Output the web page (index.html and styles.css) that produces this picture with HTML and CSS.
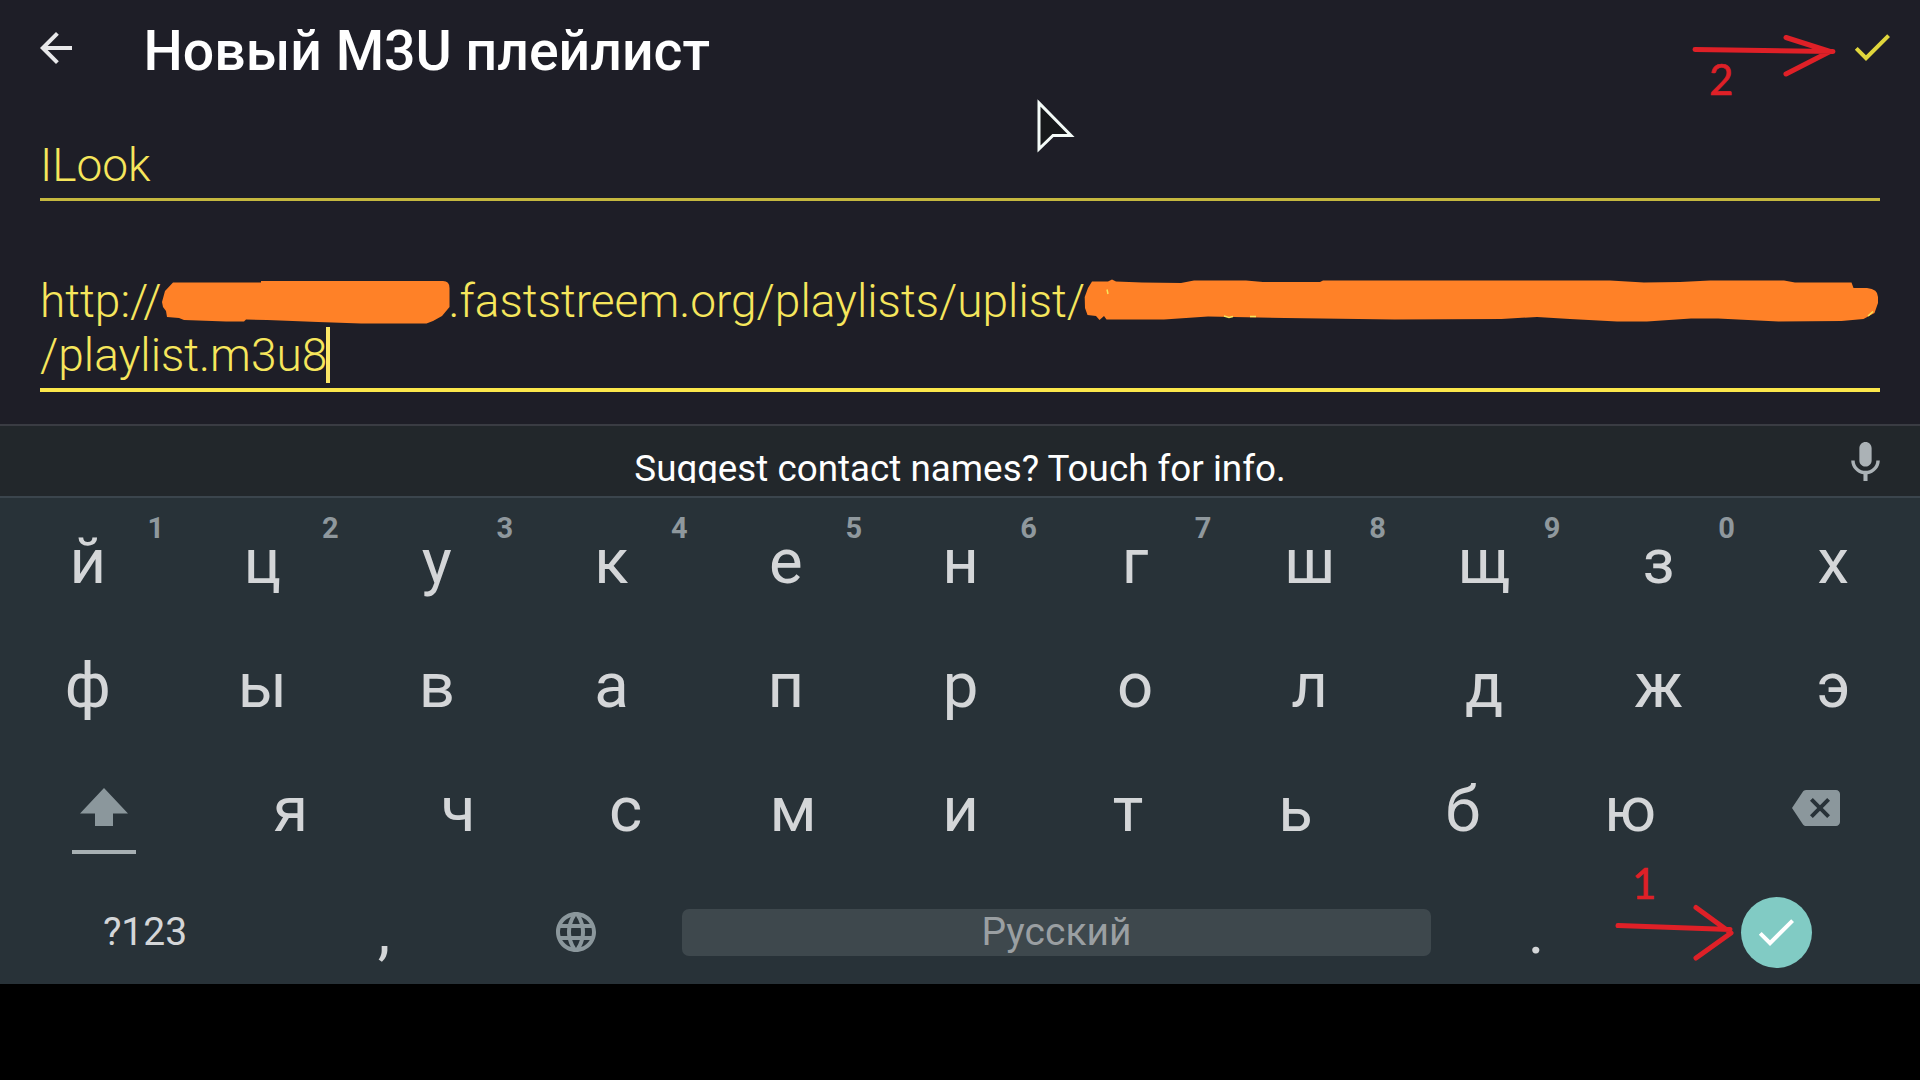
FILE: index.html
```html
<!DOCTYPE html>
<html lang="ru">
<head>
<meta charset="utf-8">
<title>Новый M3U плейлист</title>
<link rel="stylesheet" href="styles.css">
</head>
<body>
<main class="screen">
  <header class="toolbar">
    <svg class="icon back" viewBox="0 0 24 24"><path d="M20 11H7.83l5.59-5.59L12 4l-8 8 8 8 1.41-1.41L7.83 13H20v-2z"/></svg>
    <h1 class="title">Новый M3U плейлист</h1>
    <svg class="icon done" viewBox="0 0 24 24"><path d="M9 16.17L4.83 12l-1.42 1.41L9 19 21 7l-1.41-1.41z"/></svg>
  </header>
  <section class="form">
    <div class="field field-name">ILook</div>
    <div class="field field-url"><div class="line">http://<span class="hidden-host"></span>.faststreem.org/playlists/uplist/</div><div class="line">/playlist.m3u8<span class="caret"></span></div></div>
  </section>
  <section class="suggestions">
    <div class="suggestion">Suggest contact names? Touch for info.</div>
    <svg class="icon mic" viewBox="0 0 24 24"><path d="M12 14c1.66 0 3-1.34 3-3V5c0-1.66-1.34-3-3-3S9 3.34 9 5v6c0 1.66 1.34 3 3 3zm5.3-3c0 3-2.54 5.1-5.3 5.1S6.700 14 6.700 11H5c0 3.410 2.720 6.230 6 6.720V21h2v-3.280c3.280-.480 6-3.300 6-6.720h-1.700z"/></svg>
  </section>
  <section class="keyboard">
    <div class="row row-top">
      <div class="key">й<sup>1</sup></div><div class="key">ц<sup>2</sup></div><div class="key">у<sup>3</sup></div><div class="key">к<sup>4</sup></div><div class="key">е<sup>5</sup></div><div class="key">н<sup>6</sup></div><div class="key">г<sup>7</sup></div><div class="key">ш<sup>8</sup></div><div class="key">щ<sup>9</sup></div><div class="key">з<sup>0</sup></div><div class="key">х</div>
    </div>
    <div class="row row-home">
      <div class="key">ф</div><div class="key">ы</div><div class="key">в</div><div class="key">а</div><div class="key">п</div><div class="key">р</div><div class="key">о</div><div class="key">л</div><div class="key">д</div><div class="key">ж</div><div class="key">э</div>
    </div>
    <div class="row row-shift">
      <div class="key shift"><svg viewBox="0 0 66 68"><path d="M33 0 57 25.500H42V38H24V25.500H9z"/><path class="lock" d="M1 62h64v4H1z"/></svg></div>
      <div class="key">я</div><div class="key">ч</div><div class="key">с</div><div class="key">м</div><div class="key">и</div><div class="key">т</div><div class="key">ь</div><div class="key">б</div><div class="key">ю</div>
      <div class="key"><svg class="icon backspace" viewBox="0 0 24 24"><path d="M22 3H7c-.69 0-1.230.350-1.590.880L0 12l5.410 8.110c.360.530.900.890 1.590.890h15c1.100 0 2-.900 2-2V5c0-1.100-.900-2-2-2zm-3 12.590L17.590 17 14 13.410 10.410 17 9 15.590 12.590 12 9 8.410 10.410 7 14 10.590 17.590 7 19 8.410 15.410 12 19 15.590z"/></svg></div>
    </div>
    <div class="row row-bottom">
      <div class="key symbols">?123</div>
      <div class="key">,</div>
      <div class="key"><svg class="icon globe" viewBox="0 0 24 24"><path d="M11.990 2C6.470 2 2 6.480 2 12s4.470 10 9.990 10C17.520 22 22 17.520 22 12S17.520 2 11.990 2zm6.930 6h-2.950c-.320-1.250-.780-2.450-1.380-3.560 1.840.630 3.370 1.910 4.330 3.560zM12 4.040c.830 1.200 1.480 2.530 1.910 3.960h-3.820c.430-1.430 1.080-2.760 1.910-3.960zM4.260 14C4.100 13.360 4 12.690 4 12s.100-1.360.260-2h3.380c-.080.660-.140 1.320-.140 2s.060 1.340.140 2H4.260zm.820 2h2.950c.320 1.250.780 2.450 1.380 3.560-1.840-.630-3.370-1.900-4.330-3.560zm2.950-8H5.080c.960-1.660 2.490-2.930 4.330-3.560C8.810 5.550 8.350 6.750 8.030 8zM12 19.960c-.830-1.200-1.480-2.530-1.910-3.960h3.820c-.430 1.430-1.080 2.760-1.910 3.960zM14.340 14H9.660c-.090-.660-.160-1.320-.160-2s.070-1.350.160-2h4.680c.090.650.160 1.320.160 2s-.070 1.340-.160 2zm.250 5.560c.600-1.110 1.060-2.310 1.380-3.560h2.950c-.960 1.650-2.490 2.930-4.330 3.560zM16.360 14c.080-.660.140-1.320.140-2s-.060-1.340-.140-2h3.380c.160.640.260 1.310.260 2s-.100 1.360-.260 2h-3.380z"/></svg></div>
      <div class="space">Русский</div>
      <div class="key">.</div>
      <div class="key"><div class="enter"><svg class="icon" viewBox="0 0 24 24"><path d="M9 16.170L4.830 12l-1.420 1.410L9 19 21 7l-1.410-1.410z"/></svg></div></div>
    </div>
  </section>
  <svg class="annotations" viewBox="0 0 1920 1080">
    <g class="scribble">
      <path d="M162 302 165 291 173 282.500H261V281H443Q449.500 281 449.500 288V307L442 316 433 321 426.500 323.500H361L318 322 267 320 246 319.500 244 321.500H226L184 320 179 318 167 317 166 311 163 307z"/>
      <path d="M1084.700 297 1088 288 1092 281.500 1108 281.500 1112 279.500 1116 281.500 1142 282.500 1181 283 1194 280.500H1246L1263 282H1320L1323 280.500H1610L1644 282.500 1680 282 1710 280.500H1784L1795 282.500H1851.500L1853.500 288H1867Q1878 289 1878 297V303L1874.500 313 1863.500 319 1841.500 321 1778.500 321.500 1748 320 1718 318.500H1691L1647 321.500H1617L1570 319 1537 317 1501.500 319 1394.500 319.500 1285 318 1208 316.500 1164 319.500H1106.500L1104 316 1099.500 320 1096 316 1087.500 315 1085 308z"/>
      <path class="trace" d="M1107 289.500 1108 294M1224 316 1229 317.500 1233 316.500M1250 316.500H1256M1868 316 1873 311.500"/>
    </g>
    <g class="arrow">
      <path d="M1695 49.500 1730 50 1833 51.500M1786 37.500 1830 51.500 1786 74"/>
      <path d="M1618 925.500 1730 929.500M1696 907.500 1731 933 1696 958"/>
    </g>
    <text class="step" x="1709" y="95">2</text>
    <text class="step" x="1632" y="899">1</text>
    <path class="cursor" d="M1039 103V149L1053 135.500H1071z"/>
  </svg>
</main>
</body>
</html>
```
FILE: styles.css
```css
* { box-sizing: border-box; }

body {
  margin: 0;
  background: #000;
  font-family: Roboto, sans-serif;
}

.screen {
  position: relative;
  width: 1920px;
  height: 1080px;
  overflow: hidden;
  background: #000;
  display: flex;
  flex-direction: column;
}

.icon { width: 48px; height: 48px; fill: #8b979c; display: block; }

.toolbar {
  height: 110px;
  padding: 0 24px 0 32px;
  display: flex;
  align-items: flex-start;
  background: #1e1e27;
}
.back { margin-top: 24px; fill: #e8e8ea; }
.title {
  flex: 1;
  margin: 19px 0 0 63.500px;
  font-size: 55.400px;
  line-height: 66px;
  font-weight: 500;
  color: #fff;
  white-space: nowrap;
}
.done { margin-top: 23px; fill: #e0d63c; }

.form {
  height: 314px;
  padding: 0 40px;
  background: #1e1e27;
}
.field {
  font-size: 46px;
  line-height: 54px;
  font-weight: 300;
  color: #f6e65c;
  white-space: nowrap;
}
.field-name {
  height: 91px;
  padding-top: 28px;
  border-bottom: 3px solid #c5b83f;
}
.field-url {
  margin-top: 73px;
  height: 118px;
  border-bottom: 4px solid #fbe74b;
}
.line { display: flex; align-items: center; height: 54px; }
.hidden-host { width: 287px; }
.caret { width: 4px; height: 56px; margin-left: -1px; background: #fbe665; }

.suggestions {
  height: 74px;
  border-top: 2px solid #3a3c43;
  border-bottom: 2px solid #3b454d;
  background: #22272b;
  display: grid;
  grid-template-columns: 127px 1fr 127px;
}
.suggestion {
  grid-column: 2;
  height: 57px;
  overflow: hidden;
  padding-top: 21px;
  text-align: center;
  font-size: 36.800px;
  line-height: 44px;
  color: #fff;
}
.mic { margin: 12px 0 0 48px; fill: #abb2b6; width: 49px; height: 49px; }

.keyboard {
  height: 486px;
  background: #283238;
  color: #d4d6d8;
  display: grid;
  grid-template-rows: 122px 124px 124px 116px;
}
.row { display: grid; }
.row-top, .row-home { grid-template-columns: repeat(11, 1fr); }
.row-shift { grid-template-columns: 206.500px repeat(9, 1fr) 206.500px; }
.row-bottom {
  padding-top: 12px;
  grid-template-columns: 290px 188px 195px 767px 192px 288px;
  align-items: center;
}
.key {
  position: relative;
  display: flex;
  justify-content: center;
  align-items: center;
  font-size: 63.500px;
  line-height: 74px;
}
.row-top .key { padding: 6px 0 0 1px; }
.row-home .key, .row-shift .key { padding: 8px 0 0 1px; }
.key sup {
  position: absolute;
  left: 50%;
  top: 12px;
  width: 40px;
  margin-left: 48.500px;
  text-align: center;
  font-size: 29px;
  line-height: 36px;
  font-weight: 700;
  color: #8f989d;
}
.shift svg { width: 66px; height: 68px; fill: #8b979c; margin: 24px 0 0 1px; }
.shift .lock { fill: #a7b0b3; }
.backspace { margin: -4px 3px 0 0; }
.row-bottom .symbols { font-size: 39px; }
.space {
  margin: 0 9px;
  height: 47px;
  border-radius: 7px;
  background: #3e484d;
  color: #9a9fa2;
  font-size: 39px;
  line-height: 47px;
  text-align: center;
}
.enter {
  width: 71px;
  height: 71px;
  border-radius: 50%;
  background: #81cbc4;
  display: flex;
  justify-content: center;
  align-items: center;
}
.enter .icon { fill: #fff; }

.annotations { position: absolute; inset: 0; width: 1920px; height: 1080px; }
.scribble { fill: #ff8127; }
.scribble .trace { fill: none; stroke: #f6e65c; stroke-width: 1.500; }
.arrow { fill: none; stroke: #df2027; stroke-width: 5; stroke-linecap: round; stroke-linejoin: round; }
.step { font-family: Lato, sans-serif; font-size: 42px; fill: #df2027; stroke: #df2027; stroke-width: .6; }
.cursor { fill: #17191b; stroke: #f4fbf8; stroke-width: 3; }
```
